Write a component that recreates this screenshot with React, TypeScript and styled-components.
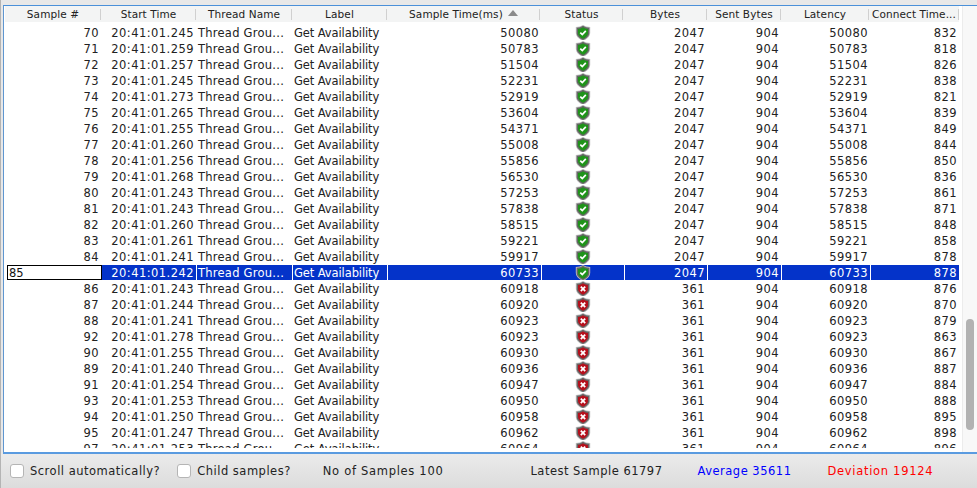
import React from "react";
import styled, { createGlobalStyle } from "styled-components";

const GlobalStyle = createGlobalStyle`
  html, body {
    margin: 0;
    padding: 0;
    background: #e8e8e8;
    overflow: hidden;
  }
`

const HEADER_COLUMNS = "96px 95px 96px 95px 153px 83px 84px 74px 88px 90px"
const ROW_COLUMNS = "97px 95px 96px 95px 154px 83px 83px 74px 89px 89px"

const Window = styled.div`
  width: 977px;
  height: 488px;
  display: flex;
  flex-direction: column;
  padding-top: 5px;
  box-sizing: border-box;
  background: #e8e8e8;
  border-left: 1px solid #b4b4b4;
  font-family: "DejaVu Sans", sans-serif;
  font-size: 11.5px;
  color: #222;
  overflow: hidden;
`

const TablePane = styled.div`
  height: 446px;
  margin-left: 2px;
  border-top: 1px solid #4a90d9;
  border-bottom: 2px solid #5a9be0;
  border-left: 1px solid #5f96d0;
  display: flex;
  background: #fff;
  padding-left: 1px;
`

const Table = styled.div`
  width: 957px;
  height: 442px;
  flex: none;
  overflow: hidden;
`

const Header = styled.div`
  display: grid;
  grid-template-columns: ${HEADER_COLUMNS};
  height: 16px;
  width: 954px;
  background: #f3f4f4;
  margin-bottom: 3px;
`

const HeaderCell = styled.div`
  position: relative;
  font-size: 10.5px;
  letter-spacing: 0.1px;
  line-height: 17px;
  text-align: center;
  white-space: nowrap;
  overflow: hidden;
  &::after {
    content: "";
    position: absolute;
    right: 0;
    top: 3px;
    bottom: 2px;
    width: 1px;
    background: #d0d0d0;
  }
`

const SortArrow = styled.span`
  display: inline-block;
  width: 0;
  height: 0;
  margin-left: 5px;
  vertical-align: 2px;
  border-left: 5px solid transparent;
  border-right: 5px solid transparent;
  border-bottom: 6px solid #8a8a8a;
`

const Row = styled.div<{ $selected?: boolean }>`
  display: grid;
  grid-template-columns: ${ROW_COLUMNS};
  height: 16px;
  width: 954px;
  color: ${(p) => (p.$selected ? "#fff" : "#222")};
`

const Cell = styled.div<{ $align?: string; $selected?: boolean; $tracking?: number }>`
  height: 16px;
  line-height: 17px;
  box-sizing: border-box;
  text-align: ${(p) => p.$align ?? "right"};
  letter-spacing: ${(p) => p.$tracking ?? 0.45}px;
  padding: 0 2px 0 1px;
  white-space: nowrap;
  overflow: hidden;
  background: ${(p) => (p.$selected ? "#0433c9" : "transparent")};
  border-right: 1px solid ${(p) => (p.$selected ? "#fff" : "transparent")};
  border-bottom: 1px solid ${(p) => (p.$selected ? "#fff" : "transparent")};
`

const EditorCell = styled.div`
  height: 15px;
  width: 95px;
  margin-left: 2px;
  box-sizing: border-box;
  border: 1px solid #000;
  background: #fff;
  color: #111;
  line-height: 14px;
  padding-left: 1px;
`

const StatusCell = styled(Cell)`
  display: flex;
  justify-content: center;
  align-items: flex-start;
  padding: 0;
`

const ScrollTrack = styled.div`
  width: 15px;
  flex: none;
  background: #f8f8f8;
  border-left: 1px solid #ececec;
  box-sizing: border-box;
  padding-top: 313px;
  display: flex;
  justify-content: center;
`

const ScrollThumb = styled.div`
  width: 8px;
  height: 111px;
  border-radius: 4px;
  background: #b2b2b2;
`

const Footer = styled.div`
  flex: 1;
  display: flex;
  align-items: center;
  padding: 0 0 1px 10px;
  margin-left: -1px;
  background: linear-gradient(#ebebeb, #dcdcdc);
  font-size: 11.5px;
  letter-spacing: 0.5px;
  color: #222;
`

const CheckLabel = styled.label`
  display: flex;
  align-items: center;
  gap: 6px;
  margin-right: 17px;
`

const CheckBox = styled.span`
  width: 14px;
  height: 14px;
  box-sizing: border-box;
  background: #fff;
  border: 1px solid #b5b5b5;
  border-radius: 3px;
`

const Stat = styled.span<{ $color?: string; $left: number; $tracking?: number }>`
  color: ${(p) => p.$color ?? "#222"};
  margin-left: ${(p) => p.$left}px;
  letter-spacing: ${(p) => p.$tracking ?? 0.5}px;
  white-space: nowrap;
`

type Sample = { id: number; ms: number; time: number; connect: number }

const samples: Sample[] = [
  [70, 245, 50080, 832], [71, 259, 50783, 818], [72, 257, 51504, 826],
  [73, 245, 52231, 838], [74, 273, 52919, 821], [75, 265, 53604, 839],
  [76, 255, 54371, 849], [77, 260, 55008, 844], [78, 256, 55856, 850],
  [79, 268, 56530, 836], [80, 243, 57253, 861], [81, 243, 57838, 871],
  [82, 260, 58515, 848], [83, 261, 59221, 858], [84, 241, 59917, 878],
  [85, 242, 60733, 878], [86, 243, 60918, 876], [87, 244, 60920, 870],
  [88, 241, 60923, 879], [92, 278, 60923, 863], [90, 255, 60930, 867],
  [89, 240, 60936, 887], [91, 254, 60947, 884], [93, 253, 60950, 888],
  [94, 250, 60958, 895], [95, 247, 60962, 898], [97, 253, 60964, 896],
].map(([id, ms, time, connect]) => ({ id, ms, time, connect }))

const headers = ["Sample #", "Start Time", "Thread Name", "Label", "Sample Time(ms)", "Status", "Bytes", "Sent Bytes", "Latency", "Connect Time..."]

const StatusIcon: React.FC<{ ok: boolean }> = ({ ok }) => (
  <svg width="16" height="16" viewBox="0 0 16 16">
    <path d="M8 0 C6 1.3 3.6 2 0.8 2 V8 C0.8 11.6 4.2 14.4 8 16 C11.8 14.4 15.2 11.6 15.2 8 V2 C12.4 2 10 1.3 8 0Z" fill="#bdbdbd" />
    <path d="M8 0.8 C6.2 2 4.2 2.7 1.7 2.8 V8 C1.7 11 4.7 13.6 8 15 C11.3 13.6 14.3 11 14.3 8 V2.8 C11.8 2.7 9.8 2 8 0.8Z" fill="#666" />
    <path d="M8 2.2 C6.5 3.2 4.8 3.8 3 3.9 V8 C3 10.5 5.3 12.5 8 13.7 C10.7 12.5 13 10.5 13 8 V3.9 C11.2 3.8 9.5 3.2 8 2.2Z" fill={ok ? "#1f931a" : "#b5101c"} />
    {ok ? (
      <path d="M5.3 7.6 L7.3 9.6 L10.8 5.9" fill="none" stroke="#fff" strokeWidth="1.7" />
    ) : (
      <path d="M5.8 5.7 L10.2 10.1 M10.2 5.7 L5.8 10.1" fill="none" stroke="#fff" strokeWidth="1.8" />
    )}
  </svg>
)

const App: React.FC = () => {
  return (
    <Window>
      <GlobalStyle />
      <TablePane>
        <Table>
          <Header>
            {headers.map((h, i) => (
              <HeaderCell key={h}>
                {h}
                {i === 4 && <SortArrow />}
              </HeaderCell>
            ))}
          </Header>
          {samples.map((s) => {
            const sel = s.id === 85
            return (
              <Row key={s.id} $selected={sel}>
                {sel ? <EditorCell>{s.id}</EditorCell> : <Cell>{s.id}</Cell>}
                <Cell $selected={sel}>20:41:01.{s.ms}</Cell>
                <Cell $selected={sel} $align="left" $tracking={0.25}>Thread Grou...</Cell>
                <Cell $selected={sel} $align="left" $tracking={-0.1}>Get Availability</Cell>
                <Cell $selected={sel}>{s.time}</Cell>
                <StatusCell $selected={sel}><StatusIcon ok={s.id <= 85} /></StatusCell>
                <Cell $selected={sel}>{s.id <= 85 ? 2047 : 361}</Cell>
                <Cell $selected={sel}>904</Cell>
                <Cell $selected={sel}>{s.time}</Cell>
                <Cell $selected={sel}>{s.connect}</Cell>
              </Row>
            )
          })}
        </Table>
        <ScrollTrack>
          <ScrollThumb />
        </ScrollTrack>
      </TablePane>
      <Footer>
        <CheckLabel><CheckBox />Scroll automatically?</CheckLabel>
        <CheckLabel><CheckBox />Child samples?</CheckLabel>
        <Stat $left={15} $tracking={0.7}>No of Samples 100</Stat>
        <Stat $left={87}>Latest Sample 61797</Stat>
        <Stat $left={35} $color="#0000ff">Average 35611</Stat>
        <Stat $left={36} $color="#ff0000" $tracking={0.7}>Deviation 19124</Stat>
      </Footer>
    </Window>
  )
}

export default App
